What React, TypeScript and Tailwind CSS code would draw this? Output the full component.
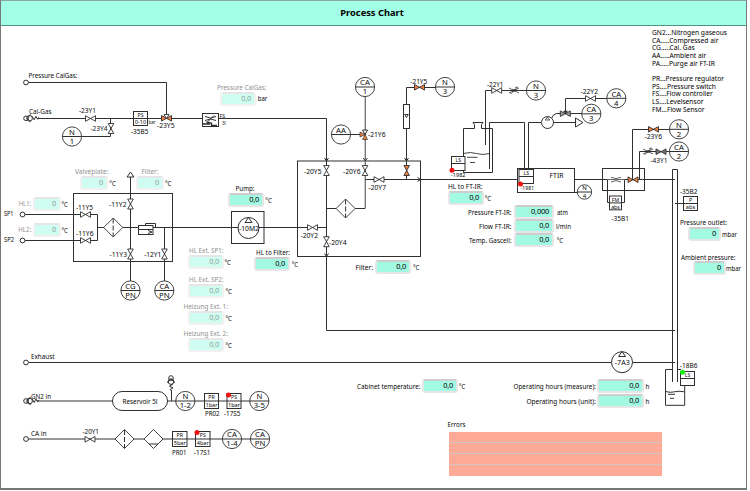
import React from "react";

const INK = "#303030";
const ORANGE = "#ee7f40";

type TextProps = { x: number; y: number; w?: number; size?: number; fill?: string; mid?: boolean; children: string };

function T({ x, y, w, size = 7.7, fill = "#080808", mid = false, children }: TextProps) {
  return (
    <text
      x={x}
      y={y}
      fontSize={size}
      fill={fill}
      stroke="none"
      textAnchor={mid ? "middle" : "start"}
      textLength={w}
      lengthAdjust="spacingAndGlyphs"
    >
      {children}
    </text>
  );
}

function Valve({ x, y, v = false, fill = "#fff", s = 5 }: { x: number; y: number; v?: boolean; fill?: string; s?: number }) {
  const h = s * 0.56;
  const d = `M${-s} ${-h}L${s} ${h}V${-h}L${-s} ${h}Z`;
  return <path d={d} fill={fill} strokeWidth={0.9} transform={`translate(${x} ${y}) rotate(${v ? 90 : 0})`} />;
}

function Throttle({ x, y }: { x: number; y: number }) {
  return (
    <g transform={`translate(${x} ${y})`} strokeWidth={0.8}>
      <path d="M-5 -2.5Q0 1 5 -2.5M-5 2.5Q0 -1 5 2.5" />
      <path d="M-3.5 3.5L3.5 -3.5M3.5 -3.5l-2.2 .5" />
    </g>
  );
}

function Bubble({ x, y, a, b, r = 9.6 }: { x: number; y: number; a: string; b?: string; r?: number }) {
  const size = r < 9 ? 6 : 7.7;
  return (
    <g>
      <circle cx={x} cy={y} r={r} fill="#fff" strokeWidth={0.9} />
      <path d={`M${x - r} ${y}H${x + r}`} />
      <T x={x} y={y - 1.7} size={size} mid>{a}</T>
      {b && <T x={x} y={y + (r < 9 ? 5.6 : 7.3)} size={size} mid>{b}</T>}
    </g>
  );
}

function Tag({ x, y, w = 14.5, h = 14.5, a, b }: { x: number; y: number; w?: number; h?: number; a: string; b?: string }) {
  return (
    <g>
      <rect x={x} y={y} width={w} height={h} fill="#fff" />
      <path d={`M${x} ${y + h / 2}h${w}`} />
      <T x={x + w / 2} y={y + 5.5} size={5.2} mid>{a}</T>
      {b && <T x={x + w / 2} y={y + h - 1.3} size={h < 14 ? 5.2 : 5.6} mid>{b}</T>}
    </g>
  );
}

function Diamond({ x, y, dashed = false }: { x: number; y: number; dashed?: boolean }) {
  return (
    <g>
      <path d={`M${x - 9.5} ${y}l9.5 -9.5 9.5 9.5 -9.5 9.5Z`} fill="#fff" strokeWidth={0.9} />
      {dashed ? <path d={`M${x} ${y - 9}v18`} strokeDasharray="5 2" /> : <path d={`M${x - 4.5} ${y + 5}h9`} />}
    </g>
  );
}

function Dot({ x, y, fill = "#ee1111" }: { x: number; y: number; fill?: string }) {
  return <circle cx={x} cy={y} r={2.5} fill={fill} stroke="none" />;
}

function Coupling({ x, y, v = false }: { x: number; y: number; v?: boolean }) {
  return (
    <g transform={`translate(${x} ${y}) rotate(${v ? 90 : 0})`}>
      <circle cx="0" cy="0" r="2.3" />
      <circle cx="3.6" cy="0" r="2.8" />
      <path d="M4.5 -4L1.5 0L4.5 4M6 -2l2.2 3.5 1.7 -3.5 1.7 3 1 -2" />
    </g>
  );
}

/* x, baseline, width, text */
type Label = [number, number, number, string];

const TAGS: Label[] = [
  [79, 113.3, 17, "-23Y1"], [90.5, 131, 17, "-23Y4"], [131, 133.5, 17.5, "-35B5"], [157, 128, 17.5, "-23Y5"],
  [76, 210.3, 17, "-11Y5"], [76, 235.7, 17.5, "-11Y6"], [109, 207, 17.5, "-11Y2"], [109.5, 257.3, 17.5, "-11Y3"],
  [144.2, 257.3, 17, "-12Y1"], [304, 173.8, 17.5, "-20Y5"], [343, 173.8, 17.5, "-20Y6"], [300.5, 237.7, 17.5, "-20Y2"],
  [329, 244.8, 17.5, "-20Y4"], [368.5, 189.5, 17.5, "-20Y7"], [410.3, 83.6, 17, "-21Y5"], [368, 137, 17.5, "-21Y6"],
  [487, 86.8, 16.5, "-22Y1"], [580.5, 94, 17.5, "-22Y2"], [611.5, 220.8, 17.5, "-35B1"], [644.5, 138.8, 17.5, "-23Y6"],
  [650.5, 163.2, 17, "-43Y1"], [680, 193.5, 17.5, "-35B2"], [680, 368, 17.5, "-18B6"], [82.5, 434.3, 16.5, "-20Y1"],
  [205, 415.6, 14.5, "PR02"], [224, 415.6, 16.5, "-17S5"], [172, 454.8, 14.5, "PR01"], [194, 454.8, 16.5, "-17S1"],
  [28.5, 78, 49, "Pressure CalGas:"], [29, 113.5, 22.5, "Cal-Gas"], [4, 216, 9.5, "SP1"], [4, 242, 10, "SP2"],
  [31, 359, 23.5, "Exhaust"], [31, 398.7, 20, "GN2 in"], [31, 436, 15.5, "CA in"],
];

const CAPTIONS: Label[] = [
  [235.5, 191, 19, "Pump:"], [256, 254.8, 34, "HL to Filter:"], [355.5, 270, 17.5, "Filter:"], [448, 189.3, 34.5, "HL to FT-IR:"],
  [468, 215, 43.5, "Pressure FT-IR:"], [479, 228.7, 32.5, "Flow FT-IR:"], [469, 243, 42.5, "Temp. Gascell:"],
  [680, 224.8, 47, "Pressure outlet:"], [681, 259.8, 54.5, "Ambient pressure:"], [357, 388.7, 63.5, "Cabinet temperature:"],
  [513.5, 388.7, 82.5, "Operating hours (measure):"], [526.5, 404.2, 69.5, "Operating hours (unit):"],
  [447.5, 427, 18, "Errors"],
];

const MUTED: Label[] = [
  [217, 89.8, 49.5, "Pressure CalGas:"], [75, 174.2, 33.5, "Valveplate:"], [141.5, 174.2, 17, "Filter:"],
  [18.7, 206.2, 12.5, "HL1:"], [18.3, 232, 13, "HL2:"], [189, 252.8, 34.5, "HL Ext. SP1:"], [189, 281.8, 34.5, "HL Ext. SP2:"],
  [183.5, 309, 44.5, "Heizung Ext. 1:"], [183.5, 336, 44.5, "Heizung Ext. 2:"],
];

const UNITS: Label[] = [
  [257.8, 101.3, 9.5, "bar"], [109.3, 186, 6.5, "°C"], [165, 186, 6.5, "°C"], [61.5, 207, 6.5, "°C"], [61.5, 232.7, 6.5, "°C"],
  [224.5, 265.2, 6.5, "°C"], [225.5, 294, 6.5, "°C"], [225.5, 320.7, 6.5, "°C"], [225.5, 347.7, 6.5, "°C"], [265.3, 203.2, 6.5, "°C"],
  [291.7, 267, 6.5, "°C"], [413, 270.3, 6.5, "°C"], [484.7, 201.2, 6.5, "°C"], [557, 215, 11, "atm"], [556, 228.7, 15, "l/min"],
  [556.7, 243, 6.5, "°C"], [722, 236.7, 15, "mbar"], [726, 271.2, 15, "mbar"], [459, 388.7, 6.3, "°C"], [645.5, 388.5, 4, "h"], [645.5, 404, 4, "h"],
];

/* left, top, width, value, inactive */
const READOUTS: [number, number, number, string, boolean][] = [
  [220, 92, 36, "0,0", true], [80, 176, 28, "0", true], [136, 176, 28, "0", true], [33, 197, 28, "0", true], [33, 223, 28, "0", true],
  [188, 255, 36, "0,0", true], [188, 284, 36, "0,0", true], [188, 311, 36, "0,0", true], [188, 338, 36, "0,0", true],
  [228, 193, 36, "0,0", false], [254, 257, 36, "0,0", false], [375, 260, 36, "0,0", false], [448, 191, 36, "0,0", false],
  [514, 205, 40, "0,000", false], [514, 219, 40, "0,0", false], [514, 233, 40, "0,0", false], [688, 227, 33, "0", false],
  [693, 261, 33, "0", false], [422, 379, 36, "0,0", false], [597, 379, 47, "0,0", false], [597, 394, 47, "0,0", false],
];

function Readout({ left, top, width, value, off }: { left: number; top: number; width: number; value: string; off: boolean }) {
  return (
    <div
      className={`absolute flex h-[14px] rounded-[3px] border-2 ${off ? "border-[#f1f1f1] border-t-[#e6e6e6]" : "border-[#e6e6e6] border-t-[#cdcdcd]"}`}
      style={{ left, top, width }}
    >
      <div className={`flex flex-1 items-center justify-end pr-[3px] text-[7.4px] leading-none tracking-[-0.2px] ${off ? "bg-[#d0fdf1] text-[#8b9f99]" : "bg-[#a3fae2] text-black"}`}>
        {value}
      </div>
    </div>
  );
}

function Flowsheet() {
  return (
    <svg className="absolute left-0 top-0" width="750" height="491" viewBox="0 0 750 491" fill="none" stroke={INK} strokeWidth="1" fontFamily='"Noto Sans", sans-serif'>
      {/* calibration gas */}
      <path d="M28.5 82.5H166.5V115M38 118.5H326.5V330.5H675M110.5 118.5V136.5H82" />
      <circle cx="26" cy="82.5" r="2.4" />
      <Coupling x={26} y={118.3} />
      <Valve x={90.5} y={118.5} />
      <Valve x={111} y={128.5} v />
      <Bubble x={72} y={136.5} a="N" b="1" />
      <Tag x={133.5} y={111.5} w={14} h={14} a="PS" b="0-10" />
      <T x={148.5} y={123.5} w={7} size={5.8}>bar</T>
      <Valve x={166.5} y={118.3} fill={ORANGE} />
      <path d="M164 114.5h5l-2.5 4Z" fill="#fff" strokeWidth="0.9" />
      <rect x="202.5" y="113.5" width="16" height="13" fill="#fff" />
      <path d="M205 116.5q5.5 3 11 0M205 120.5q5.5 -3 11 0M207 122.5l7 -7" />
      <path d="M203 124h6l-1.5 -1.5 4 .5v3.5M211 125.5h6" strokeWidth="1.3" />
      <T x={219.5} y={117.7} w={5.5} size={5.2}>FS</T>
      <T x={222} y={124.6} w={3.8} size={5.2}>3l</T>

      {/* valve plate */}
      <rect x="73.5" y="193.5" width="99" height="68" />
      <path d="M25 214.5H97.5V240.5H25M97.5 227.5H326.5M130.5 177V281M164.5 227.5V281" />
      <circle cx="22.5" cy="214.5" r="2.4" fill="#fff" />
      <circle cx="22.5" cy="240.5" r="2.4" fill="#fff" />
      <Valve x={85.5} y={214.5} />
      <Valve x={85.5} y={240.5} />
      <Diamond x={113.2} y={227.5} dashed />
      <path d="M130.5 172L127 177h7Z" fill="#fff" />
      <Valve x={130.5} y={204} v />
      <Valve x={130.5} y={254} v />
      <Valve x={164.5} y={254} v />
      <rect x="138.5" y="225.5" width="14.5" height="9" fill="#fff" />
      <path d="M139 229.5h14M145.5 225v-1.5h10v3.5M148 230.5l4 1.5 -4 1.5" />
      <Bubble x={130.5} y={290.5} a="CG" b="PN" />
      <Bubble x={164.3} y={290.5} a="CA" b="PN" />

      {/* sample pump */}
      <rect x="231.5" y="211.5" width="32.5" height="32" />
      <circle cx="248.5" cy="228" r="10.5" fill="#fff" />
      <path d="M248.5 217.5l-3.5 5h7Z" />
      <T x={239} y={231} w={20} size={7.7}>-10M2</T>

      {/* heated filter */}
      <rect x="297.5" y="161" width="123" height="95.5" />
      <path d="M365.3 97V208.5" stroke="#777" strokeWidth="1.4" />
      <path d="M326.5 208.5H365M365.5 179.5H517M406.5 179.5V87.5H436M350 134.5h12" />
      <path d="M324.5 158l2 3 2 -3M363.3 158l2 3 2 -3M404.5 158l2 3 2 -3M417.5 177.5l3 2 -3 2M324.5 253.5l2 3 2 -3" />
      <Valve x={326.5} y={170.5} v />
      <Valve x={365} y={170.5} v />
      <Valve x={406.7} y={170.5} v fill={ORANGE} />
      <Valve x={312.5} y={227.5} />
      <Valve x={326.5} y={241.7} v />
      <Valve x={379} y={179.5} />
      <Diamond x={345.6} y={208.5} dashed />
      <rect x="403.5" y="104.5" width="6" height="24" fill="#fff" />
      <path d="M404.7 114.5h3.6l-1.8 3Z" />
      <Valve x={419.5} y={87.3} fill={ORANGE} />
      <Bubble x={445} y={87} a="N" b="3" />
      <Bubble x={365} y={87} a="CA" b="1" />
      <Bubble x={341} y={134.5} a="AA" />
      <path d="M362.5 130h5l-2.5 4.5Z" fill="#fff" />
      <path d="M362.5 139.5h5l-2.5 -5ZM360 132v5l5 -2.5Z" fill={ORANGE} strokeWidth="0.7" />

      {/* wash bottle and FT-IR */}
      <path d="M463.5 172.5V128.5H474.5V124.5L473 122.5H483L481.5 124.5V128.5H492.5V172.5Z" />
      <path d="M463.5 153.5q7 -2 13 0t13 0M467 157.3h10.5M470 162.5h5" strokeWidth="0.9" />
      <path d="M485.5 145V90.5H526M489.5 169V122.5H524.5V169M528.5 169V122.5H541" />
      <Tag x={451.5} y={156.5} w={13.5} h={14} a="LS" />
      <Dot x={452} y={170.3} />
      <T x={451} y={177.3} w={14.5} size={6}>-1982</T>
      <Valve x={496.7} y={90.5} />
      <Throttle x={514} y={90.5} />
      <Bubble x={536} y={90.5} a="N" b="3" />
      <path d="M551.5 118.5Q553 114 556.5 113.5H582M565.5 113V98.5H607M553 122.5H575" />
      <circle cx="547.5" cy="122.5" r="6" fill="#fff" />
      <path d="M547.5 117l-2.2 3h4.4Z" strokeWidth="0.8" />
      <path d="M575.5 118v9l7.5 -4.5Z" fill="#fff" />
      <Valve x={565.3} y={113.7} fill="#999" />
      <path d="M563.5 111h4l-2 2.5Z" fill={INK} strokeWidth="0.6" />
      <Valve x={590.5} y={98.5} />
      <Bubble x={591.3} y={113.8} a="CA" b="3" />
      <Bubble x={616.3} y={98.3} a="CA" b="4" />
      <rect x="517.5" y="168.5" width="57" height="24" />
      <Tag x={519} y={169.5} w={14.5} h={14} a="LS" />
      <Dot x={520.5} y={184} />
      <T x={520.7} y={190} w={13.5} size={6}>-1981</T>
      <T x={549.5} y={178} w={14}>FTIR</T>
      <path d="M574.5 192.5h4M574.5 179.5H607.5M624.5 179.5H675" />
      <Bubble x={584.5} y={192} r={7.2} a="N" b="4" />

      {/* flow measurement */}
      <rect x="602.5" y="168.5" width="42" height="22" />
      <path d="M607.5 179.5V202.5H624.5V179.5M632.5 179.5V129.5H670M639.5 179.5V151.5H670" />
      <path d="M607.5 179.5H625M611 177.3q5 2.5 10 0M611 181.9q5 -2.5 10 0" stroke="#666" />
      <Valve x={633} y={179.7} fill={ORANGE} />
      <Tag x={609.5} y={196} w={12} h={13.8} a="FM" b="abs" />
      <Valve x={653.5} y={129.3} fill={ORANGE} />
      <Throttle x={648} y={151.5} />
      <Valve x={661} y={151.7} fill="#777" />
      <Bubble x={679} y={129.3} a="N" b="2" />
      <Bubble x={679} y={151.5} a="CA" b="2" />
      <path d="M675 203.5H690" />
      <Tag x={683.5} y={196.5} w={14} h={14} a="P" b="abs" />

      {/* outlet column, exhaust and level vessel */}
      <path d="M672.5 382V169.5H677.5V382M28.5 362.5H675" />
      <circle cx="26" cy="362.5" r="2.4" fill="#fff" />
      <circle cx="622" cy="362.2" r="10.5" fill="#fff" />
      <path d="M622 351.5l-3.5 5h7Z" />
      <T x={614.8} y={365.3} w={15}>-7A3</T>
      <path d="M672.5 369.5H665.5V405.3H684.7V386M677.5 369.5H681M665.5 391.5q5 1.5 9 .3t10 0M668 394.3h7M670 398.3h4" />
      <Tag x={680.5} y={371.5} w={14} h={14} a="LS" />
      <Dot x={682.6} y={372.2} fill="#14f014" />

      {/* nitrogen supply */}
      <Coupling x={26} y={401} />
      <path d="M37 401H260M171.5 390V401" />
      <Coupling x={171} y={378} v />
      <rect x="112.5" y="391.5" width="55" height="19" rx="9.5" fill="#fff" />
      <T x={122.5} y={403.8} w={35}>Reservoir 5l</T>
      <Bubble x={185.3} y={401} a="N" b="1-2" />
      <Tag x={204.5} y={393.5} w={14} h={15} a="PR" b="1bar" />
      <Tag x={227} y={393.5} w={14} h={15} a="PS" b="1bar" />
      <Dot x={228.5} y={395} />
      <Bubble x={259.3} y={401} a="N" b="3-5" />

      {/* compressed air supply */}
      <path d="M28.5 439H260" />
      <circle cx="26" cy="439" r="2.4" />
      <Valve x={90} y={439.3} />
      <Diamond x={124.5} y={439} dashed />
      <Diamond x={153.5} y={439} />
      <Tag x={172.5} y={431.5} w={14.5} h={15} a="PR" b="5bar" />
      <Tag x={195.5} y={431.5} w={14.5} h={15} a="PS" b="4bar" />
      <Dot x={197} y={432.6} />
      <Bubble x={232} y={439} a="CA" b="1-4" />
      <Bubble x={260} y={439} a="CA" b="PN" />

      {[...TAGS, ...CAPTIONS].map(([x, y, w, s]) => <T key={`${x},${y}`} x={x} y={y} w={w}>{s}</T>)}
      {MUTED.map(([x, y, w, s]) => <T key={`${x},${y}`} x={x} y={y} w={w} fill="#909090">{s}</T>)}
      {UNITS.map(([x, y, w, s]) => <T key={`${x},${y}`} x={x} y={y} w={w} size={7.2}>{s}</T>)}
    </svg>
  );
}

const LEGEND = [
  ["GN2...Nitrogen gaseous", "CA.....Compressed air", "CG.....Cal. Gas", "AA.....Ambient air", "PA.....Purge air FT-IR"],
  ["PR...Pressure regulator", "PS....Pressure switch", "FS....Flow controller", "LS....Levelsensor", "FM...Flow Sensor"],
];

export default function App() {
  return (
    <div className="relative h-[491px] w-[750px] overflow-hidden bg-white font-['Noto_Sans',sans-serif]">
      <div className="flex h-[490px] w-[747px] flex-col border border-b-2 border-[#777] border-t-[#8fa5a5]">
        <header className="flex h-[25px] shrink-0 items-center justify-center border-b border-[#4f9482] bg-[#a2ffe8] pr-[3px] text-[9.3px] font-bold text-black">
          Process Chart
        </header>
        <main className="flex flex-1 flex-col items-end justify-between pb-[12px] pt-[3px]">
          <div className="flex w-[94px] flex-col gap-[7.7px] text-[6.7px] leading-[7.66px] text-black">
            {LEGEND.map((group) => (
              <ul key={group[0]} className="whitespace-nowrap">
                {group.map((line) => <li key={line}>{line}</li>)}
              </ul>
            ))}
          </div>
          <div className="mr-[84px] flex h-[44px] w-[213px] flex-col">
            {[0, 1, 2].map((row) => <div key={row} className="h-[11px] border-b border-[#d3c4bd] bg-[#ffaa96]" />)}
            <div className="h-[11px] bg-[#ffaa96]" />
          </div>
        </main>
      </div>
      <Flowsheet />
      {READOUTS.map(([left, top, width, value, off]) => (
        <Readout key={`${left}-${top}`} left={left} top={top} width={width} value={value} off={off} />
      ))}
    </div>
  );
}
